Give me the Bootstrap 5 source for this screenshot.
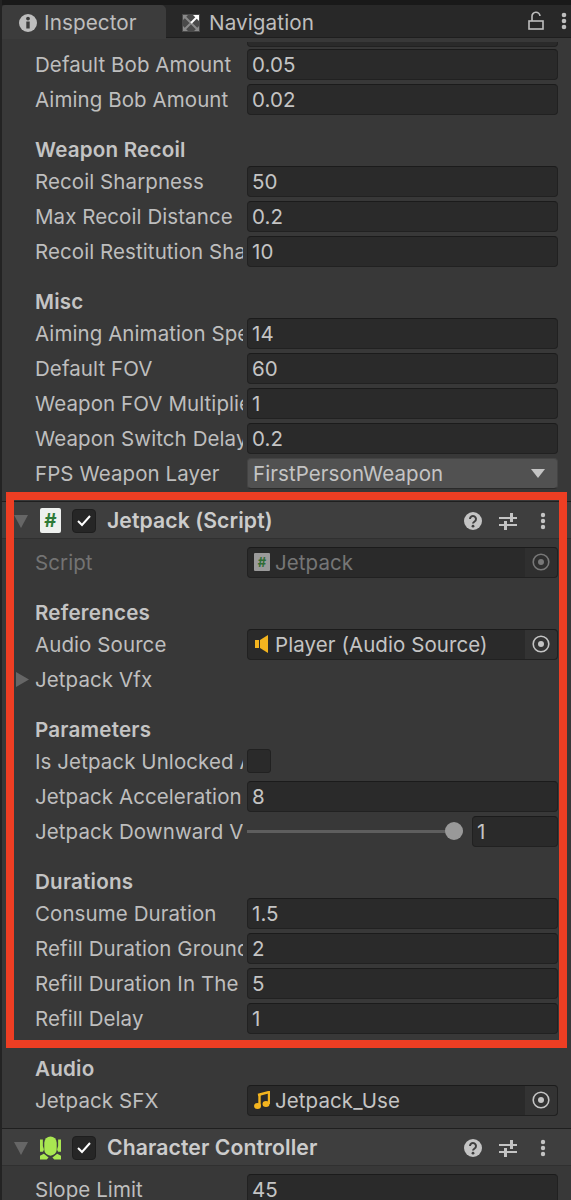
<!DOCTYPE html>
<html lang="en"><head><meta charset="utf-8"><title>Inspector</title>
<link rel="stylesheet" href="https://cdn.jsdelivr.net/npm/bootstrap@5.3.0/dist/css/bootstrap.min.css">
<style>
html,body{background:#383838;margin:0}
body{font-family:Inter,"Liberation Sans",sans-serif;font-size:20.5px;letter-spacing:.08px;color:#bebebe;width:571px;height:1200px;overflow:hidden;position:relative}
.pane{border-left:2px solid #232323;height:1200px;overflow:hidden}
.topstrip{height:5px;background:#191919;margin-left:-2px}
.tabbar{height:33px;background:#282828;margin-left:-2px;border-bottom:1px solid #1e1e1e}
.tabitem{height:33px;gap:7px;padding:2px 0 0 17px;color:#bebebe;font-size:20.7px}
.tabactive{width:164px;background:#3c3c3c;border-radius:3px 5px 0 0;margin-left:2px;height:34px}
.tabother{padding-left:16px;gap:9px}
.cutrow{height:8.5px;overflow:hidden;padding-left:245px;padding-right:13px;display:flex;align-items:flex-end}
.cutrow .fld{flex:1;height:5px;border-top:0;border-radius:0 0 4px 4px}
.prow{height:35px;padding-left:33px;padding-right:13px}
.lbl{width:208px;margin-right:4px;padding-top:2px;flex:none;overflow:hidden;white-space:nowrap}
.lbl-dim{color:#737373}
.head{font-weight:600;font-size:20.6px;letter-spacing:.2px;height:27px;margin-top:20px;padding-left:33px;color:#c4c4c4;line-height:25px}
.fld{flex:1;height:31px;background:#2a2a2a;border:1px solid #212121;border-top-color:#1b1b1b;border-radius:4px;padding-left:4px;line-height:29px;white-space:nowrap;overflow:hidden;color:#c4c4c4;min-width:0}
.fld-sel{background:#515151;border-color:#444;border-bottom-color:#2a2a2a;padding:0 12px 0 5px}
.fld-obj{padding:0;gap:5px;background:#2a2a2a;padding-left:6px}
.fld-off{color:#767676}
.pick{width:32px;height:29px;margin-left:auto;background:#333;flex:none;border-radius:0 3px 3px 0}
.fld-off .pick{background:#2f2f2f}
.chkempty{width:24px;height:24px;background:#2a2a2a;border:1px solid #212121;border-radius:3px}
.sliderbox{flex:1;gap:9px}
.sltrack{flex:1;height:3px;background:#5e5e5e;position:relative}
.slthumb{position:absolute;right:0;top:-8px;width:18px;height:18px;border-radius:50%;background:#999}
.slnum{flex:0 0 86px}
.comp{height:36px;background:#3e3e3e;margin-top:11px;padding-top:2px;box-shadow:0 -1px 0 #1f1f1f,0 1px 0 #303030;padding-left:12px;padding-right:25px;font-weight:600;font-size:21.2px;color:#cccccc}
.comp + .compgap{height:7px}
.compname{margin-left:11px}
.tool{margin-left:auto;gap:17px}
.dotsgap{margin-left:6px}
.tri{width:14px;flex:none}
.filedoc{width:21px;height:25px;background:#eef0ee;border-radius:2px;color:#2f7a38;font-weight:700;font-size:19px;line-height:25px;text-align:center;margin-left:12px;flex:none}
.hchk{width:24px;height:24px;background:#262626;border:1px solid #1e1e1e;border-radius:4px;margin-left:11px;flex:none}
.ccicon{margin-left:12px;flex:none}
.redframe{position:absolute;left:6px;top:492px;width:561px;height:556px;border:8.5px solid #ee3e23;pointer-events:none}
.mini{width:16px;height:18px;background:#9a9a9a;color:#2f6d35;font-size:13px;font-weight:700;line-height:18px;text-align:center;flex:none;border-radius:1px}
.vfxarrow{left:14px;top:10px}
.winctl{gap:17px;padding-right:4px}
</style></head><body>
<div class="pane">
<div class="topstrip"></div>
<div class="tabbar d-flex">
<div class="tabitem tabactive d-flex align-items-center">
<svg width="18" height="18" viewBox="0 0 18 18"><circle cx="9" cy="9" r="9" fill="#bebebe"/><rect x="7.3" y="7.5" width="3.4" height="7" fill="#3c3c3c"/><circle cx="9" cy="4.6" r="1.9" fill="#3c3c3c"/></svg>
<span>Inspector</span></div>
<div class="tabitem tabother d-flex align-items-center">
<svg width="18" height="18" viewBox="0 0 18 18"><rect width="18" height="18" fill="#4a4a4a"/><path d="M9 9 3 3M9 9l-6 6M9 9l6 6" stroke="#8a8a8a" stroke-width="2"/><path d="M1 1h5L1 6zM1 17h5l-5-5zM17 17h-5l5-5z" fill="#8a8a8a"/><path d="M9 9l6-6" stroke="#fff" stroke-width="2"/><path d="M11 1h6v6z" fill="#fff"/></svg>
<span>Navigation</span></div>
<div class="winctl d-flex align-items-center ms-auto">
<svg width="16" height="20" viewBox="0 0 16 20" fill="none" stroke="#bebebe" stroke-width="1.6"><rect x="1" y="10" width="14" height="8"/><path d="M4 10V5.500a4 4 0 0 1 8-.5"/></svg>
<svg width="6" height="18" viewBox="0 0 6 18" fill="#bebebe"><circle cx="3" cy="3" r="2.300"/><circle cx="3" cy="9" r="2.300"/><circle cx="3" cy="15" r="2.300"/></svg>
</div></div>

<div class="cutrow"><div class="fld"></div></div>
<div class="prow d-flex align-items-center"><div class="lbl">Default Bob Amount</div><div class="fld">0.05</div></div>
<div class="prow d-flex align-items-center"><div class="lbl">Aiming Bob Amount</div><div class="fld">0.02</div></div>
<div class="head">Weapon Recoil</div>
<div class="prow d-flex align-items-center"><div class="lbl">Recoil Sharpness</div><div class="fld">50</div></div>
<div class="prow d-flex align-items-center"><div class="lbl">Max Recoil Distance</div><div class="fld">0.2</div></div>
<div class="prow d-flex align-items-center"><div class="lbl">Recoil Restitution Sharpness</div><div class="fld">10</div></div>
<div class="head">Misc</div>
<div class="prow d-flex align-items-center"><div class="lbl">Aiming Animation Speed</div><div class="fld">14</div></div>
<div class="prow d-flex align-items-center"><div class="lbl">Default FOV</div><div class="fld">60</div></div>
<div class="prow d-flex align-items-center"><div class="lbl">Weapon FOV Multiplier</div><div class="fld">1</div></div>
<div class="prow d-flex align-items-center"><div class="lbl">Weapon Switch Delay</div><div class="fld">0.2</div></div>
<div class="prow d-flex align-items-center"><div class="lbl">FPS Weapon Layer</div><div class="fld fld-sel d-flex align-items-center justify-content-between"><span>FirstPersonWeapon</span><svg width="14" height="9" viewBox="0 0 14 9"><path d="M0 0h14L7 9z" fill="#c4c4c4"/></svg></div></div>

<div class="comp d-flex align-items-center">
<svg class="tri" height="14" viewBox="0 0 14 14"><path d="M0 1h14L7 14z" fill="#666"/></svg>
<div class="filedoc">#</div>
<div class="hchk d-flex align-items-center justify-content-center"><svg width="14" height="12" viewBox="0 0 14 12" fill="none" stroke="#fff" stroke-width="2"><path d="M1 6l4 4 8-9"/></svg></div>
<div class="compname">Jetpack (Script)</div>
<div class="tool d-flex align-items-center">
<svg width="18" height="18" viewBox="0 0 18 18"><circle cx="9" cy="9" r="9" fill="#c4c4c4"/><path d="M6 7a3 3 0 1 1 4.600 2.500C9.600 10.200 9 10.700 9 11.500" fill="none" stroke="#3e3e3e" stroke-width="2"/><circle cx="9" cy="14.200" r="1.400" fill="#3e3e3e"/></svg>
<svg width="18" height="18" viewBox="0 0 18 18" fill="#c4c4c4"><rect y="5" width="18" height="2"/><rect x="11" y="1" width="3" height="9"/><rect y="12" width="18" height="2"/><rect x="5" y="9" width="3" height="9"/></svg>
<svg class="dotsgap" width="6" height="18" viewBox="0 0 6 18" fill="#c4c4c4"><circle cx="3" cy="3" r="2.200"/><circle cx="3" cy="9" r="2.200"/><circle cx="3" cy="15" r="2.200"/></svg>
</div></div>
<div class="compgap"></div>
<div class="prow d-flex align-items-center"><div class="lbl lbl-dim">Script</div><div class="fld fld-off fld-obj d-flex align-items-center"><div class="mini">#</div><span>Jetpack</span><div class="pick d-flex align-items-center justify-content-center"><svg width="18" height="18" viewBox="0 0 18 18"><circle cx="9" cy="9" r="7.800" fill="none" stroke="#787878" stroke-width="1.600"/><circle cx="9" cy="9" r="3" fill="#787878"/></svg></div></div></div>
<div class="head">References</div>
<div class="prow d-flex align-items-center"><div class="lbl">Audio Source</div><div class="fld fld-obj d-flex align-items-center"><svg width="16" height="18" viewBox="0 0 16 18"><rect x="1" y="5" width="4" height="8" fill="#f3b41f"/><path d="M6 5l8-5v18l-8-5z" fill="#f3b41f"/></svg><span>Player (Audio Source)</span><div class="pick d-flex align-items-center justify-content-center"><svg width="18" height="18" viewBox="0 0 18 18"><circle cx="9" cy="9" r="7.800" fill="none" stroke="#c4c4c4" stroke-width="1.600"/><circle cx="9" cy="9" r="3" fill="#c4c4c4"/></svg></div></div></div>
<div class="prow d-flex align-items-center position-relative"><svg class="position-absolute vfxarrow" width="13" height="15" viewBox="0 0 13 15"><path d="M0 0l13 7.500L0 15z" fill="#666"/></svg><div class="lbl">Jetpack Vfx</div></div>
<div class="head">Parameters</div>
<div class="prow d-flex align-items-center"><div class="lbl">Is Jetpack Unlocked At Start</div><div class="chkempty"></div></div>
<div class="prow d-flex align-items-center"><div class="lbl">Jetpack Acceleration</div><div class="fld">8</div></div>
<div class="prow d-flex align-items-center"><div class="lbl">Jetpack Downward Velocity</div><div class="sliderbox d-flex align-items-center"><div class="sltrack"><div class="slthumb"></div></div><div class="fld slnum">1</div></div></div>
<div class="head">Durations</div>
<div class="prow d-flex align-items-center"><div class="lbl">Consume Duration</div><div class="fld">1.5</div></div>
<div class="prow d-flex align-items-center"><div class="lbl">Refill Duration Grounded</div><div class="fld">2</div></div>
<div class="prow d-flex align-items-center"><div class="lbl">Refill Duration In The Air</div><div class="fld">5</div></div>
<div class="prow d-flex align-items-center"><div class="lbl">Refill Delay</div><div class="fld">1</div></div>
<div class="head">Audio</div>
<div class="prow d-flex align-items-center"><div class="lbl">Jetpack SFX</div><div class="fld fld-obj d-flex align-items-center"><svg width="16" height="18" viewBox="0 0 16 18"><path d="M4 4l11-3v12" fill="none" stroke="#f3b41f" stroke-width="2.400"/><ellipse cx="3.500" cy="15" rx="3.500" ry="3" fill="#f3b41f"/><ellipse cx="12" cy="13" rx="3.500" ry="3" fill="#f3b41f"/><path d="M5.500 4v11" stroke="#f3b41f" stroke-width="2.400"/></svg><span>Jetpack_Use</span><div class="pick d-flex align-items-center justify-content-center"><svg width="18" height="18" viewBox="0 0 18 18"><circle cx="9" cy="9" r="7.800" fill="none" stroke="#c4c4c4" stroke-width="1.600"/><circle cx="9" cy="9" r="3" fill="#c4c4c4"/></svg></div></div></div>

<div class="comp d-flex align-items-center">
<svg class="tri" height="14" viewBox="0 0 14 14"><path d="M0 1h14L7 14z" fill="#666"/></svg>
<svg class="ccicon" width="21" height="24" viewBox="0 0 22 24"><g fill="#a9e751"><rect x="4.500" y="0" width="13" height="20" rx="6.500"/><path d="M0 3h3v7l1 3v1l-1 2H0zM22 3h-3v7l-1 3v1l1 2h3zM0 24v-4l4-2 5 4-2 2zM22 24v-4l-4-2-5 4 2 2z"/></g></svg>
<div class="hchk d-flex align-items-center justify-content-center"><svg width="14" height="12" viewBox="0 0 14 12" fill="none" stroke="#fff" stroke-width="2"><path d="M1 6l4 4 8-9"/></svg></div>
<div class="compname">Character Controller</div>
<div class="tool d-flex align-items-center">
<svg width="18" height="18" viewBox="0 0 18 18"><circle cx="9" cy="9" r="9" fill="#c4c4c4"/><path d="M6 7a3 3 0 1 1 4.600 2.500C9.600 10.200 9 10.700 9 11.500" fill="none" stroke="#3e3e3e" stroke-width="2"/><circle cx="9" cy="14.200" r="1.400" fill="#3e3e3e"/></svg>
<svg width="18" height="18" viewBox="0 0 18 18" fill="#c4c4c4"><rect y="5" width="18" height="2"/><rect x="11" y="1" width="3" height="9"/><rect y="12" width="18" height="2"/><rect x="5" y="9" width="3" height="9"/></svg>
<svg class="dotsgap" width="6" height="18" viewBox="0 0 6 18" fill="#c4c4c4"><circle cx="3" cy="3" r="2.200"/><circle cx="3" cy="9" r="2.200"/><circle cx="3" cy="15" r="2.200"/></svg>
</div></div>
<div class="compgap"></div>
<div class="prow d-flex align-items-center"><div class="lbl">Slope Limit</div><div class="fld">45</div></div>
</div>
<div class="redframe"></div>
<script src="https://cdn.jsdelivr.net/npm/bootstrap@5.3.0/dist/js/bootstrap.bundle.min.js"></script>
</body></html>
